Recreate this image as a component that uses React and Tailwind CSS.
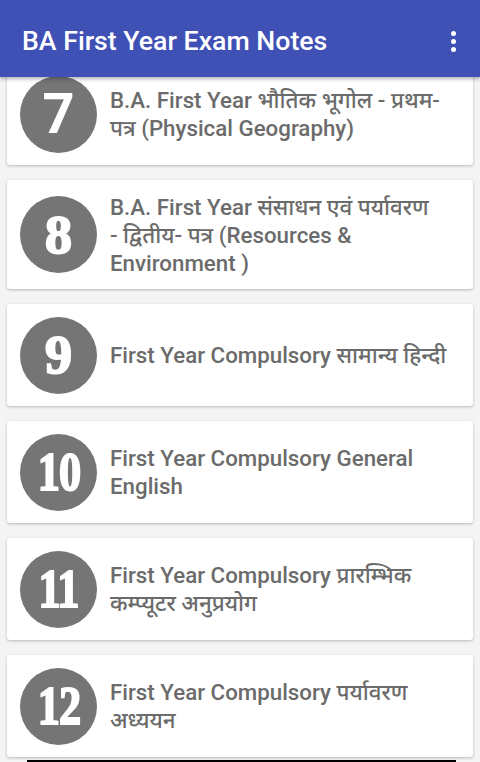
import React from "react";

const items = [
  { n: "7", serif: false, lines: ["B.A. First Year भौतिक भूगोल - प्रथम-", "पत्र (Physical Geography)"] },
  { n: "8", serif: true, lines: ["B.A. First Year संसाधन एवं पर्यावरण", "- द्वितीय- पत्र (Resources &", "Environment )"] },
  { n: "9", serif: true, lines: ["First Year Compulsory सामान्य हिन्दी"] },
  { n: "10", serif: true, lines: ["First Year Compulsory General", "English"] },
  { n: "11", serif: true, lines: ["First Year Compulsory प्रारम्भिक", "कम्प्यूटर अनुप्रयोग"] },
  { n: "12", serif: true, lines: ["First Year Compulsory पर्यावरण", "अध्ययन"] },
];

function Card({ item }) {
  return (
    <div className="flex items-center bg-white rounded-[3px] shadow-[0_1px_3px_rgba(0,0,0,0.25)] pl-[13px] pr-2 py-[12.5px] min-h-[102px]">
      <div className="w-[77px] h-[77px] rounded-full bg-[#757575] flex items-center justify-center shrink-0 overflow-hidden">
        {item.serif ? (
          <span
            className={
              "text-white font-bold text-[54px] leading-none inline-block whitespace-nowrap [-webkit-text-stroke:2px_white] " +
              (item.n.length > 1 ? "scale-x-[0.82] tracking-[-1px]" : "")
            }
            style={{ fontFamily: '"Liberation Serif", serif' }}
          >
            {item.n}
          </span>
        ) : (
          <span
            className="text-white font-bold text-[56px] leading-none"
            style={{ fontFamily: 'Roboto, "Liberation Sans", sans-serif' }}
          >
            {item.n}
          </span>
        )}
      </div>
      <div
        className="ml-[13px] text-[#6b6b6b] text-[22.3px] leading-[28px] font-medium"
        style={{ fontFamily: 'Roboto, "Noto Sans", sans-serif' }}
      >
        {item.lines.map((l, i) => (
          <div key={i} className="whitespace-nowrap">{l}</div>
        ))}
      </div>
    </div>
  );
}

export default function App() {
  return (
    <div className="w-[480px] h-[762px] overflow-hidden bg-[#f4f4f4] relative" style={{ fontFamily: 'Roboto, sans-serif' }}>
      <div className="relative z-10 h-[77px] bg-[#3f51b5] shadow-[0_2px_4px_rgba(0,0,0,0.3)] flex items-center justify-between pl-[22px] pr-[20px]">
        <span className="text-white text-[26.7px] font-medium pt-[6px]" style={{ fontFamily: 'Roboto, sans-serif' }}>
          BA First Year Exam Notes
        </span>
        <div className="flex flex-col gap-[3px] pt-[6px] pr-[4px]">
          <span className="w-[5px] h-[5px] rounded-full bg-white" />
          <span className="w-[5px] h-[5px] rounded-full bg-white" />
          <span className="w-[5px] h-[5px] rounded-full bg-white" />
        </div>
      </div>
      <div className="-mt-[14px] px-[7px] flex flex-col gap-[15px]">
        {items.map((it) => (
          <Card key={it.n} item={it} />
        ))}
      </div>
      <div className="absolute left-[27px] right-[24px] bottom-0 h-[2px] bg-black" />
    </div>
  );
}
